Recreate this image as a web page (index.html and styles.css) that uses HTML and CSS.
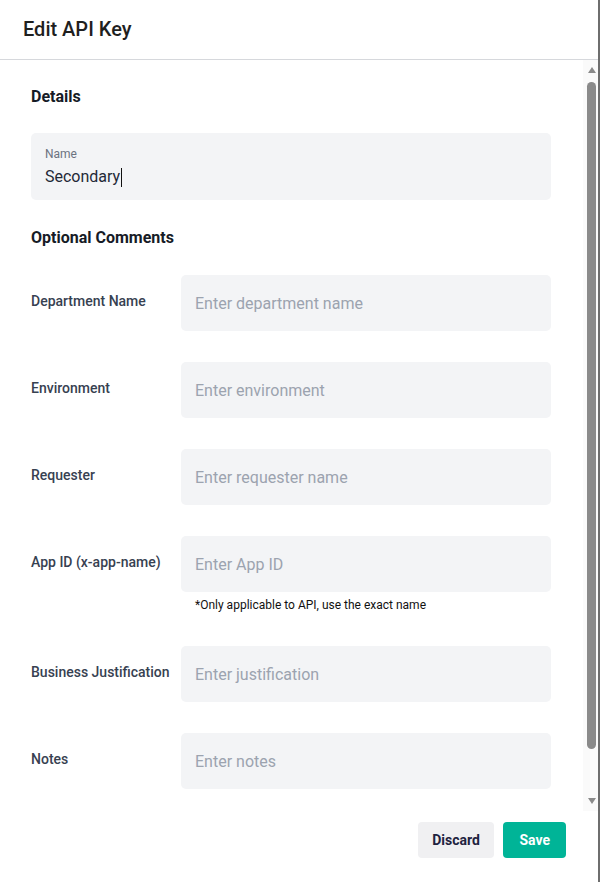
FILE: index.html
```html
<!DOCTYPE html>
<html lang="en">
<head>
<meta charset="utf-8">
<title>Edit API Key</title>
<link rel="stylesheet" href="styles.css">
</head>
<body>
<div class="page">
  <div class="dialog">
    <div class="header">
      <h1 class="title">Edit API Key</h1>
    </div>
    <div class="body">
      <div class="content">
        <h2 class="section-title">Details</h2>
        <div class="name-field">
          <div class="name-label">Name</div>
          <div class="name-value">Secondary<span class="caret"></span></div>
        </div>

        <h2 class="section-title section-title--comments">Optional Comments</h2>

        <div class="rows">
          <div class="row">
            <div class="row-label">Department Name</div>
            <div class="row-control">
              <div class="input placeholder">Enter department name</div>
            </div>
          </div>
          <div class="row">
            <div class="row-label">Environment</div>
            <div class="row-control">
              <div class="input placeholder">Enter environment</div>
            </div>
          </div>
          <div class="row">
            <div class="row-label">Requester</div>
            <div class="row-control">
              <div class="input placeholder">Enter requester name</div>
            </div>
          </div>
          <div class="row">
            <div class="row-label">App ID (x-app-name)</div>
            <div class="row-control">
              <div class="input placeholder">Enter App ID</div>
              <div class="helper">*Only applicable to API, use the exact name</div>
            </div>
          </div>
          <div class="row">
            <div class="row-label">Business Justification</div>
            <div class="row-control">
              <div class="input placeholder">Enter justification</div>
            </div>
          </div>
          <div class="row">
            <div class="row-label">Notes</div>
            <div class="row-control">
              <div class="input placeholder">Enter notes</div>
            </div>
          </div>
        </div>
      </div>
      <div class="scrollbar">
        <div class="sb-btn sb-btn--up"><span class="arrow-up"></span></div>
        <div class="sb-track"><div class="sb-thumb"></div></div>
        <div class="sb-btn sb-btn--down"><span class="arrow-down"></span></div>
      </div>
    </div>
    <div class="footer">
      <button class="btn btn--discard" type="button">Discard</button>
      <button class="btn btn--save" type="button">Save</button>
    </div>
  </div>
  <div class="edge"></div>
</div>
</body>
</html>
```

FILE: styles.css
```css
* {
  box-sizing: border-box;
}

html, body {
  margin: 0;
  padding: 0;
  background: #ffffff;
}

body {
  font-family: Roboto, "Noto Sans", "Liberation Sans", sans-serif;
  color: #1f2937;
}

.page {
  display: flex;
  width: 601px;
  height: 882px;
  overflow: hidden;
}

.dialog {
  width: 598px;
  height: 882px;
  display: flex;
  flex-direction: column;
  background: #ffffff;
}

.edge {
  width: 2px;
  height: 882px;
  background: #6e6e6e;
}

.header {
  height: 60px;
  flex: none;
  display: flex;
  align-items: center;
  padding: 0 0 1px 23px;
  border-bottom: 1px solid #d6d8dc;
}

.title {
  margin: 0;
  font-size: 20px;
  line-height: 28px;
  font-weight: 500;
  color: #1f1f1f;
}

.body {
  height: 751px;
  flex: none;
  display: flex;
}

.content {
  flex: 1;
  overflow: hidden;
  padding: 25px 32px 0 31px;
}

.section-title {
  margin: 0;
  font-size: 16px;
  line-height: 24px;
  font-weight: 700;
  color: #161b26;
}

.name-field {
  margin-top: 24px;
  height: 67px;
  background: #f3f4f6;
  border-radius: 5px;
  padding: 13px 14px 10px;
}

.name-label {
  font-size: 12px;
  line-height: 16px;
  color: #6b7280;
  margin-bottom: 3px;
}

.name-value {
  font-size: 16px;
  line-height: 24px;
  color: #1f2937;
  display: flex;
  align-items: center;
}

.caret {
  display: inline-block;
  width: 1px;
  height: 19px;
  background: #111111;
  margin-left: 1px;
}

.section-title--comments {
  margin-top: 26px;
}

.rows {
  margin-top: 25px;
  display: flex;
  flex-direction: column;
  gap: 31px;
}

.row {
  display: flex;
  align-items: flex-start;
}

.row-label {
  width: 150px;
  flex: none;
  padding-top: 16px;
  font-size: 14px;
  line-height: 20px;
  font-weight: 500;
  color: #374151;
}

.row-control {
  flex: 1;
}

.input {
  height: 56px;
  background: #f3f4f6;
  border-radius: 5px;
  padding: 0 14px;
  display: flex;
  align-items: center;
  font-size: 16px;
}

.placeholder {
  color: #9ca3af;
}

.helper {
  margin: 5px 0 2px;
  padding-left: 14px;
  font-size: 12px;
  line-height: 16px;
  color: #111111;
}

.scrollbar {
  width: 15px;
  flex: none;
  display: flex;
  flex-direction: column;
  background: #fafafa;
}

.sb-btn {
  height: 20px;
  flex: none;
  display: flex;
  align-items: center;
  justify-content: center;
  padding-left: 2px;
}

.arrow-up {
  width: 0;
  height: 0;
  border-left: 4px solid transparent;
  border-right: 4px solid transparent;
  border-bottom: 6px solid #8a8a8a;
}

.arrow-down {
  width: 0;
  height: 0;
  border-left: 4px solid transparent;
  border-right: 4px solid transparent;
  border-top: 6px solid #8a8a8a;
}

.sb-track {
  flex: 1;
  padding: 2px 2px 0 4px;
}

.sb-thumb {
  height: 667px;
  background: #8a8a8a;
  border-radius: 5px;
}

.footer {
  flex: 1;
  display: flex;
  justify-content: flex-end;
  align-items: flex-start;
  gap: 9px;
  padding: 11px 32px 0 0;
}

.btn {
  height: 36px;
  border: none;
  border-radius: 4px;
  font-family: Roboto, "Noto Sans", "Liberation Sans", sans-serif;
  font-size: 14px;
  font-weight: 700;
  cursor: pointer;
}

.btn--discard {
  padding: 0 14.5px;
  background: #f0f0f2;
  color: #1e2240;
}

.btn--save {
  padding: 0 16px;
  background: #00b497;
  color: #ffffff;
}
```
